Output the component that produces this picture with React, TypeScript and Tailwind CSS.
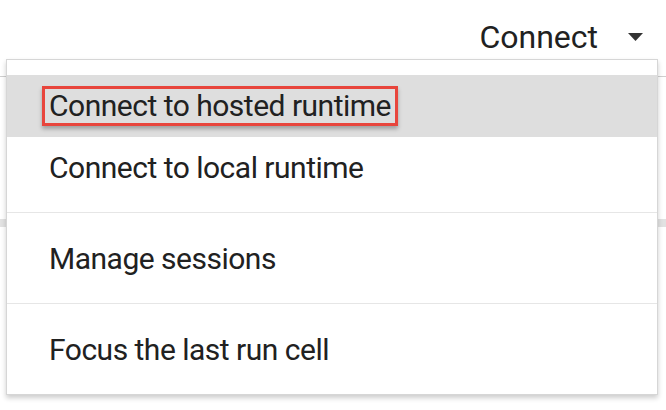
import React from 'react';

const MenuItem = ({ label, active = false, boxed = false }: { label: string; active?: boolean; boxed?: boolean }) => (
  <div className={`h-[62px] flex items-center pl-[42px] ${active ? 'bg-[#dedede]' : ''}`}>
    {boxed ? (
      <span className="ml-[-7px] border-[3px] border-[#e8453c] px-[4px] h-[40px] flex items-center shadow-[0_3px_4px_rgba(0,0,0,0.28)]">
        {label}
      </span>
    ) : (
      <span>{label}</span>
    )}
  </div>
);

const App = () => {
  return (
    <div className="relative w-[666px] h-[410px] bg-white overflow-hidden text-[#212121] font-['Roboto','Liberation_Sans',sans-serif] text-[30px] tracking-[-0.5px] leading-none">
      {/* Top bar */}
      <div className="h-[59px] flex items-center justify-end pt-[14px] pr-[23px] gap-[30px]">
        <span className="text-[32px] tracking-normal">Connect</span>
        <svg width="15" height="8" viewBox="0 0 15 8">
          <path d="M0 0 L15 0 L7.5 8 Z" fill="#333" />
        </svg>
      </div>

      {/* page bits peeking out behind the menu */}
      <div className="absolute left-0 right-0 top-[76px] h-px bg-[#cfcfcf]" />
      <div className="absolute left-0 right-0 top-[219px] h-[8px] bg-[#e2e2e2]" />

      {/* Dropdown menu */}
      <div className="absolute left-[6px] top-[59px] w-[652px] bg-white border border-[#d6d6d6] shadow-[0_3px_5px_rgba(0,0,0,0.2)]">
        <div className="pt-[15px] pb-[13px]">
          <MenuItem label="Connect to hosted runtime" active boxed />
          <MenuItem label="Connect to local runtime" />
        </div>
        <div className="h-px bg-[#e6e6e6]" />
        <div className="pt-[15px] pb-[13px]">
          <MenuItem label="Manage sessions" />
        </div>
        <div className="h-px bg-[#e6e6e6]" />
        <div className="pt-[15px] pb-[13px]">
          <MenuItem label="Focus the last run cell" />
        </div>
      </div>
    </div>
  );
};

export default App;
